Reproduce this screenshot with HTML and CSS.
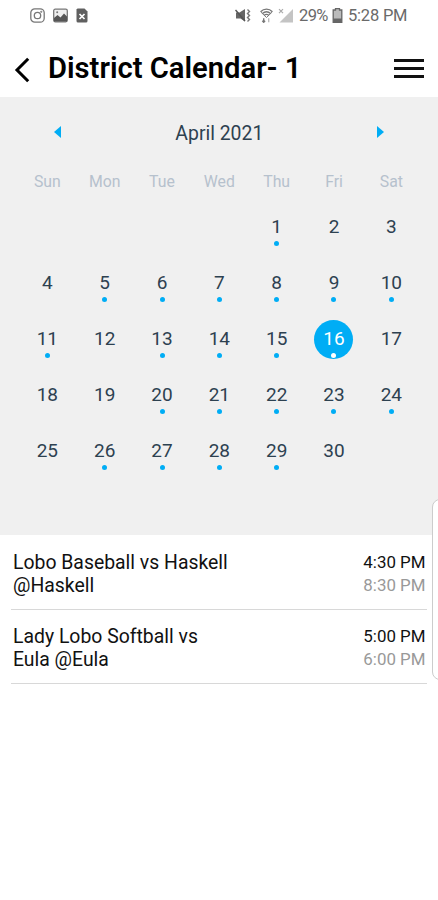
FILE: index.html
```html
<!DOCTYPE html>
<html lang="en">

<head>
    <meta charset="UTF-8">
    <meta name="viewport" content="width=device-width, initial-scale=1.0">
    <title>District Calendar</title>
    <link rel="stylesheet" href="styles.css">
</head>

<body>
    <div class="status-bar">
        <div class="status-left">
            <svg width="15" height="15" viewBox="0 0 15 15" fill="none" stroke="#777" stroke-width="1.3">
                <rect x="0.8" y="0.8" width="13.4" height="13.4" rx="4" />
                <circle cx="7.5" cy="7.5" r="3.2" />
                <circle cx="11.3" cy="3.8" r="0.4" />
            </svg>
            <svg width="15" height="15" viewBox="0 0 15 15">
                <rect x="0.7" y="1.2" width="13.6" height="12.6" rx="1.5" fill="#eee" stroke="#777" stroke-width="1.3" />
                <path d="M1 13.5V10l3.5-3 3 2.5L11 5.5l3 3v5z" fill="#555" />
                <circle cx="4.2" cy="4.3" r="1" fill="#777" />
            </svg>
            <svg width="12" height="15" viewBox="0 0 12 15">
                <path d="M1.5 0.5H8.5L11.5 3.5V13a1.5 1.5 0 0 1-1.5 1.5H2A1.5 1.5 0 0 1 0.5 13V1.5z" fill="#606060" />
                <path d="M3.5 6l5 5M8.5 6l-5 5" stroke="#fff" stroke-width="1.7" />
            </svg>
        </div>
        <div class="status-right">
            <svg class="mute" width="17" height="15" viewBox="0 0 17 15">
                <path d="M1 4.5h3.5L10 1v12.5L5.5 10.5H1z" fill="#666" />
                <path d="M0.5 2L10 13" stroke="#555" stroke-width="1.5" />
                <path d="M12.5 1.5l2 2-2 2 2 2-2 2 2 2-2 2" fill="none" stroke="#777" stroke-width="1.4" />
            </svg>
            <svg class="wifi" width="13" height="15" viewBox="0 0 13 15" fill="none" stroke="#777" stroke-width="1.4">
                <path d="M0.6 3.7C4 0.2 9 0.2 12.4 3.7M2.4 5.6c2.5-2.3 5.7-2.3 8.2 0M4.2 7.3c1.5-1.2 3.1-1.2 4.6 0" />
                <path d="M0.8 4L6.5 9.5 12.2 4" stroke-width="1" />
                <path d="M3.7 10.3v4M2.3 12.8l1.4 1.5 1.4-1.5" />
                <path d="M8.7 14.3v-4" stroke="#bbb" />
            </svg>
            <svg class="signal" width="16" height="15" viewBox="0 0 16 15">
                <path d="M15 1v13.5H1.5z" fill="#c4c4c4" />
                <path d="M1 1.2l4 4M5 1.2l-4 4" stroke="#aaa" stroke-width="1.2" />
            </svg>
            <span class="percent">29%</span>
            <svg class="battery" width="11" height="15" viewBox="0 0 11 15">
                <path d="M3.5 0.5h4v1.5h2.3v12.3H1.2V2h2.3z" fill="#bbb" stroke="#666" stroke-width="1.3" />
                <path d="M1.2 10.5h8.6v3.8H1.2z" fill="#666" />
            </svg>
            <span class="clock">5:28 PM</span>
        </div>
    </div>

    <header>
        <svg class="back" width="16" height="26" viewBox="0 0 16 26" fill="none" stroke="#000" stroke-width="3">
            <path d="M14.2 1.8L3 13l11.2 11.2" />
        </svg>
        <h1>District Calendar- 1</h1>
        <div class="menu">
            <span></span>
            <span></span>
            <span></span>
        </div>
    </header>

    <div class="calendar">
        <div class="month">
            <svg width="7" height="12" viewBox="0 0 7 12"><path d="M7 0v12L0 6z" /></svg>
            <span>April 2021</span>
            <svg width="7" height="12" viewBox="0 0 7 12"><path d="M0 0v12l7-6z" /></svg>
        </div>

        <div class="weekdays">
            <span>Sun</span>
            <span>Mon</span>
            <span>Tue</span>
            <span>Wed</span>
            <span>Thu</span>
            <span>Fri</span>
            <span>Sat</span>
        </div>

        <div class="days">
            <div class="day first event">1</div>
            <div class="day">2</div>
            <div class="day">3</div>
            <div class="day">4</div>
            <div class="day event">5</div>
            <div class="day event">6</div>
            <div class="day event">7</div>
            <div class="day event">8</div>
            <div class="day event">9</div>
            <div class="day event">10</div>
            <div class="day event">11</div>
            <div class="day">12</div>
            <div class="day event">13</div>
            <div class="day event">14</div>
            <div class="day event">15</div>
            <div class="day event selected">16</div>
            <div class="day">17</div>
            <div class="day">18</div>
            <div class="day">19</div>
            <div class="day event">20</div>
            <div class="day event">21</div>
            <div class="day event">22</div>
            <div class="day event">23</div>
            <div class="day event">24</div>
            <div class="day">25</div>
            <div class="day event">26</div>
            <div class="day event">27</div>
            <div class="day event">28</div>
            <div class="day event">29</div>
            <div class="day">30</div>
        </div>
    </div>

    <div class="events">
        <div class="item">
            <div class="name">Lobo Baseball vs Haskell @Haskell</div>
            <div class="time">
                <div>4:30 PM</div>
                <div class="end">8:30 PM</div>
            </div>
        </div>
        <div class="item">
            <div class="name">Lady Lobo Softball vs Eula @Eula</div>
            <div class="time">
                <div>5:00 PM</div>
                <div class="end">6:00 PM</div>
            </div>
        </div>
    </div>

    <div class="edge-panel"></div>
</body>

</html>
```
FILE: styles.css
```css
* {
    margin: 0;
    padding: 0;
    box-sizing: border-box;
}

body {
    font-family: Roboto, sans-serif;
    background: #fff;
    color: #111;
    height: 900px;
    position: relative;
    overflow: hidden;
}

svg {
    display: block;
    flex-shrink: 0;
}

.status-bar {
    display: flex;
    justify-content: space-between;
    height: 38px;
    padding: 7px 31px 0 30px;
}

.status-left,
.status-right {
    display: flex;
    align-items: center;
    height: 16px;
}

.status-left {
    gap: 8px;
}

.status-right {
    color: #6a6a6a;
    font-size: 16.5px;
    line-height: 16px;
    white-space: nowrap;
}

.mute {
    margin-right: 8px;
}

.wifi {
    margin-right: 5px;
}

.signal {
    margin-right: 5px;
}

.percent {
    width: 29px;
    margin-top: 2px;
    letter-spacing: -0.6px;
}

.battery {
    margin: 0 5px 0 4px;
}

.clock {
    width: 59px;
    margin-top: 2px;
    letter-spacing: -0.2px;
}

header {
    display: flex;
    align-items: center;
    height: 59px;
    padding: 0 14px;
}

.back {
    margin-top: 4px;
}

h1 {
    flex: 1;
    margin-left: 18px;
    font-size: 29.2px;
    font-weight: 600;
    line-height: 34px;
    color: #000;
    white-space: nowrap;
}

.menu {
    display: flex;
    flex-direction: column;
    gap: 5px;
    width: 30px;
    margin-top: 2px;
}

.menu span {
    height: 3px;
    background: #111;
}

.calendar {
    height: 438px;
    padding: 0 18px 0 18.7px;
    background: #f0f0f0;
}

.month {
    display: flex;
    justify-content: space-between;
    align-items: center;
    height: 70px;
    padding: 0 35.5px;
    font-size: 19.4px;
    color: #2d4150;
}

.month svg {
    fill: #00adf5;
}

.month span {
    margin-top: 2px;
}

.weekdays {
    display: grid;
    grid-template-columns: repeat(7, 1fr);
    height: 32px;
    line-height: 29px;
    text-align: center;
    font-size: 15.8px;
    color: #b6c1cd;
}

.days {
    display: grid;
    grid-template-columns: repeat(7, 1fr);
    grid-auto-rows: 39px;
    row-gap: 17px;
    padding-top: 9px;
    justify-items: center;
}

.day {
    position: relative;
    width: 39px;
    height: 39px;
    line-height: 38px;
    text-align: center;
    font-size: 19px;
    color: #2d4150;
}

.first {
    grid-column: 5;
}

.event::after {
    content: '';
    position: absolute;
    left: 17px;
    bottom: 1px;
    width: 5px;
    height: 5px;
    border-radius: 50%;
    background: #00adf5;
}

.selected {
    border-radius: 50%;
    background: #00adf5;
    color: #fff;
}

.selected::after {
    background: #fff;
}

.events {
    padding: 0 11px;
}

.item {
    display: flex;
    justify-content: space-between;
    height: 74px;
    padding: 15px 1.5px 0 2px;
    border-bottom: 1px solid #d8d8d8;
    line-height: 23px;
}

.item:first-child {
    height: 75px;
    padding-top: 16px;
}

.name {
    width: 220px;
    font-size: 19.4px;
}

.time {
    font-size: 16.9px;
    text-align: right;
}

.end {
    color: #999;
}

/* edge handle over the right side of the screen */
.edge-panel {
    position: absolute;
    right: -10px;
    top: 499px;
    width: 16px;
    height: 181px;
    border: 1px solid #ccc;
    border-radius: 8px;
    background: #fff;
}
```
